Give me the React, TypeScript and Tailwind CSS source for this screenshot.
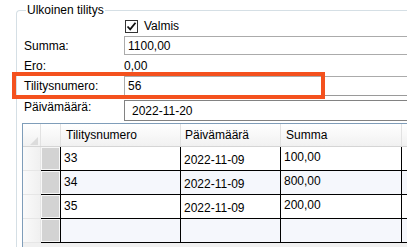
import React from "react";

type Row = { id: string; date: string; sum: string };

const rows: Row[] = [
  { id: "33", date: "2022-11-09", sum: "100,00" },
  { id: "34", date: "2022-11-09", sum: "800,00" },
  { id: "35", date: "2022-11-09", sum: "200,00" },
  { id: "", date: "", sum: "" },
];

const CheckBox: React.FC = () => (
  <div className="w-[13px] h-[13px] border border-[#333333] bg-white flex items-center justify-center">
    <svg width="11" height="11" viewBox="0 0 11 11">
      <path d="M1.5 5.5 L4.2 8.3 L9.5 1.8" fill="none" stroke="#111" strokeWidth="1.8" />
    </svg>
  </div>
);

const Label: React.FC<{ text: string }> = ({ text }) => (
  <div className="w-[100px] shrink-0 text-[12px] leading-[14px] text-black">{text}</div>
);

const DataGrid: React.FC = () => (
  <div className="mt-[2px] -ml-[2px] border-l border-t border-[#7f9db9] bg-[#f0f0f0] w-[400px] h-[130px] overflow-hidden">
    {/* header */}
    <div className="flex h-[23px] border-b border-[#d5d5d5] bg-gradient-to-b from-white to-[#f1f1f1] text-[12px] leading-[14px] text-black">
      <div className="w-[18px] shrink-0 border-r border-[#e2e2e2] relative">
        <svg className="absolute left-[7px] top-[13px]" width="8" height="8" viewBox="0 0 8 8">
          <path d="M8 0 L8 8 L0 8 Z" fill="#dcdcdc" />
        </svg>
      </div>
      <div className="w-[20px] shrink-0 border-r border-[#e2e2e2]" />
      <div className="w-[120px] shrink-0 border-r border-[#e2e2e2] pl-[5px] flex items-center">Tilitysnumero</div>
      <div className="w-[100px] shrink-0 border-r border-[#e2e2e2] pl-[4px] flex items-center">Päivämäärä</div>
      <div className="w-[121px] shrink-0 border-r border-[#e2e2e2] pl-[5px] flex items-center">Summa</div>
      <div className="flex-1" />
    </div>
    {rows.map((r, i) => (
      <div
        key={i}
        className={`flex h-[24px] text-[12px] leading-[14px] text-black ${i % 2 === 1 ? "bg-[#f5f7fc]" : "bg-white"}`}
      >
        <div className="w-[18px] shrink-0 border-r border-b border-[#e6e6e6] bg-gradient-to-r from-[#fafafa] to-[#f0f0f0]" />
        <div className="w-[20px] shrink-0 border-r border-b border-black bg-[#f7f7f7] pt-[1px] pl-[1px] pr-[1px]">
          <div className="h-[21px] bg-[#d3d3d3]" />
        </div>
        <div className="w-[120px] shrink-0 border-r border-b border-black pl-[3px] pt-[4px]">{r.id}</div>
        <div className="w-[100px] shrink-0 border-r border-b border-black pl-[3px] flex items-center pt-[2px]">{r.date}</div>
        <div className="w-[121px] shrink-0 border-r border-b border-black pl-[3px] pt-[3px]">{r.sum}</div>
        <div className="flex-1 border-b border-black" />
      </div>
    ))}
  </div>
);

export default function App() {
  return (
    <div
      className="relative w-[407px] h-[247px] bg-white overflow-hidden"
      style={{ fontFamily: '"Segoe UI", "Liberation Sans", Arial, sans-serif' }}
    >
      <fieldset className="mt-[3px] ml-[16px] border-l border-t border-[#d5dfe5] rounded-tl-[4px] w-[420px] h-[260px]">
        <legend className="ml-[9px] px-[1px] text-[12px] leading-[14px] text-black">Ulkoinen tilitys</legend>
        <div className="pl-[7px] flex flex-col">
          <div className="flex items-center h-[18px]">
            <div className="w-[101px] shrink-0" />
            <CheckBox />
            <span className="ml-[6px] text-[12px] leading-[14px] text-black">Valmis</span>
          </div>
          <div className="flex items-center h-[21px]">
            <Label text="Summa:" />
            <div className="w-[300px] h-[19px] border border-[#ababab] flex items-center pl-[3px] text-[12px] leading-[14px] text-black">
              1100,00
            </div>
          </div>
          <div className="flex items-center h-[20px]">
            <Label text="Ero:" />
            <span className="text-[12px] leading-[14px] text-black">0,00</span>
          </div>
          <div className="flex items-center h-[20px]">
            <Label text="Tilitysnumero:" />
            <div className="w-[300px] h-[20px] border border-[#ababab] border-b-[#9a9a9a] flex items-center pl-[3px] text-[12px] leading-[14px] text-black">
              56
            </div>
          </div>
          <div className="flex items-start h-[25px] pt-[4px]">
            <div className="w-[100px] shrink-0 text-[12px] leading-[14px] text-black">Päivämäärä:</div>
            <div className="w-[300px] h-[21px] border border-[#828282] flex items-center pl-[7px] pt-[1px] text-[12px] leading-[14px] text-black">
              2022-11-20
            </div>
          </div>
          <DataGrid />
        </div>
      </fieldset>
      {/* highlight frame drawn over the form */}
      <div className="absolute left-[12px] top-[72px] w-[313px] h-[27px] border-4 border-[#f4511e]" />
    </div>
  );
}
